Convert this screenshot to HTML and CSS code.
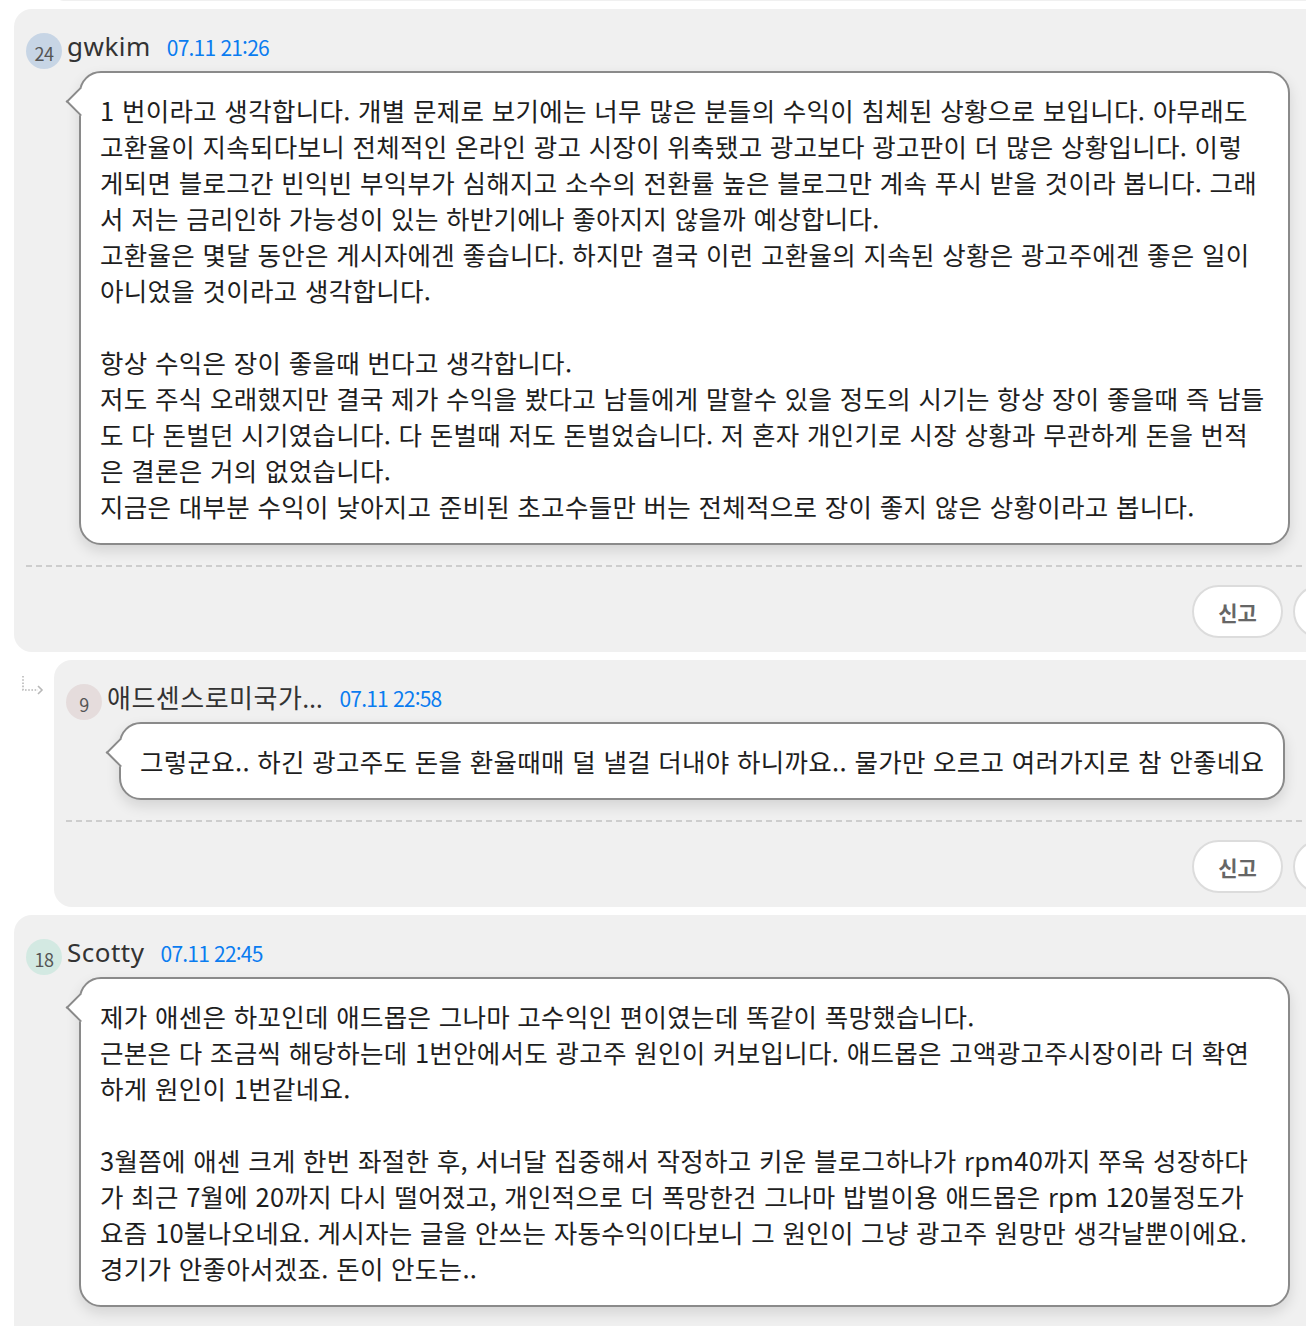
FILE: index.html
```html
<!DOCTYPE html>
<html lang="ko">

<head>
    <meta charset="utf-8">
    <title>댓글</title>
    <link rel="stylesheet" href="styles.css">
</head>

<body>
    <div class="thread">

        <!-- bottom of the previous reply, scrolled mostly out of view -->
        <div class="reply-row prev-stub">
            <div class="reply-icon"></div>
            <div class="card"></div>
        </div>

        <div class="card">
            <div class="comment-head">
                <span class="level level-blue">24</span>
                <span class="nick">gwkim</span>
                <span class="date">07.11 21:26</span>
            </div>
            <div class="bubble bubble-full">
                1 번이라고 생각합니다. 개별 문제로 보기에는 너무 많은 분들의 수익이 침체된 상황으로 보입니다. 아무래도<br>
                고환율이 지속되다보니 전체적인 온라인 광고 시장이 위축됐고 광고보다 광고판이 더 많은 상황입니다. 이렇<br>
                게되면 블로그간 빈익빈 부익부가 심해지고 소수의 전환률 높은 블로그만 계속 푸시 받을 것이라 봅니다. 그래<br>
                서 저는 금리인하 가능성이 있는 하반기에나 좋아지지 않을까 예상합니다.<br>
                고환율은 몇달 동안은 게시자에겐 좋습니다. 하지만 결국 이런 고환율의 지속된 상황은 광고주에겐 좋은 일이<br>
                아니었을 것이라고 생각합니다.<br>
                <br>
                항상 수익은 장이 좋을때 번다고 생각합니다.<br>
                저도 주식 오래했지만 결국 제가 수익을 봤다고 남들에게 말할수 있을 정도의 시기는 항상 장이 좋을때 즉 남들<br>
                도 다 돈벌던 시기였습니다. 다 돈벌때 저도 돈벌었습니다. 저 혼자 개인기로 시장 상황과 무관하게 돈을 번적<br>
                은 결론은 거의 없었습니다.<br>
                지금은 대부분 수익이 낮아지고 준비된 초고수들만 버는 전체적으로 장이 좋지 않은 상황이라고 봅니다.
            </div>
            <div class="divider"></div>
            <div class="actions">
                <button class="pill">신고</button>
                <button class="pill">답글</button>
            </div>
        </div>

        <div class="reply-row">
            <div class="reply-icon">
                <svg width="24" height="20" viewBox="0 0 24 20">
                    <path d="M2 1 V15 H17" fill="none" stroke="#b8b8b8" stroke-width="1.6" stroke-dasharray="1.6 1.6" />
                    <path d="M17 11 L21 15 L17 19" fill="none" stroke="#b8b8b8" stroke-width="1.6" />
                </svg>
            </div>
            <div class="card">
                <div class="comment-head">
                    <span class="level level-rose">9</span>
                    <span class="nick">애드센스로미국가…</span>
                    <span class="date">07.11 22:58</span>
                </div>
                <div class="bubble">
                    그렇군요.. 하긴 광고주도 돈을 환율때매 덜 낼걸 더내야 하니까요.. 물가만 오르고 여러가지로 참 안좋네요
                </div>
                <div class="divider"></div>
                <div class="actions">
                    <button class="pill">신고</button>
                    <button class="pill">답글</button>
                </div>
            </div>
        </div>

        <div class="card">
            <div class="comment-head">
                <span class="level level-mint">18</span>
                <span class="nick">Scotty</span>
                <span class="date">07.11 22:45</span>
            </div>
            <div class="bubble bubble-full">
                제가 애센은 하꼬인데 애드몹은 그나마 고수익인 편이였는데 똑같이 폭망했습니다.<br>
                근본은 다 조금씩 해당하는데 1번안에서도 광고주 원인이 커보입니다. 애드몹은 고액광고주시장이라 더 확연<br>
                하게 원인이 1번같네요.<br>
                <br>
                3월쯤에 애센 크게 한번 좌절한 후, 서너달 집중해서 작정하고 키운 블로그하나가 rpm40까지 쭈욱 성장하다<br>
                가 최근 7월에 20까지 다시 떨어졌고, 개인적으로 더 폭망한건 그나마 밥벌이용 애드몹은 rpm 120불정도가<br>
                요즘 10불나오네요. 게시자는 글을 안쓰는 자동수익이다보니 그 원인이 그냥 광고주 원망만 생각날뿐이에요.<br>
                경기가 안좋아서겠죠. 돈이 안도는..
            </div>
            <div class="divider"></div>
            <div class="actions">
                <button class="pill">신고</button>
                <button class="pill">답글</button>
            </div>
        </div>

    </div>
</body>

</html>
```

FILE: styles.css
```css
html,
body {
    margin: 0;
    background-color: white;
    overflow: hidden;
}

body {
    font-family: "Noto Sans CJK KR", sans-serif;
    color: #1e1e1e;
}

.thread {
    width: 1382px;
    padding-left: 14px;
    display: flex;
    flex-direction: column;
    gap: 8px;
}

.card {
    background-color: #f0f0f0;
    border-radius: 18px;
    padding: 22px 12px 14px 12px;
}

.reply-row {
    display: flex;
}

.reply-row .card {
    flex: 1;
}

.reply-icon {
    width: 40px;
    flex-shrink: 0;
    padding-top: 15px;
    padding-left: 7px;
    box-sizing: border-box;
}

.prev-stub {
    margin-top: -19px;
}

.prev-stub .card {
    height: 20px;
    padding: 0;
}

.comment-head {
    display: flex;
    align-items: center;
    height: 40px;
}

.level {
    width: 36px;
    height: 36px;
    border-radius: 50%;
    display: flex;
    align-items: center;
    justify-content: center;
    padding-top: 4px;
    box-sizing: border-box;
    font-size: 18px;
    letter-spacing: -0.5px;
    color: #555;
    margin-right: 5px;
}

.level-blue {
    background-color: #c7d5e5;
}

.level-rose {
    background-color: #e5dcdc;
}

.level-mint {
    background-color: #d3e9e2;
}

.nick {
    font-family: "Noto Sans", "Noto Sans CJK KR", sans-serif;
    font-size: 26px;
    letter-spacing: 0.5px;
    color: #333;
    margin-right: 16px;
    padding-bottom: 10px;
}

.date {
    font-size: 21px;
    letter-spacing: -0.8px;
    color: #0a7cf0;
    padding-bottom: 9px;
}

.bubble {
    position: relative;
    display: inline-block;
    max-width: 1211px;
    box-sizing: border-box;
    margin-left: 53px;
    padding: 19px 19px;
    background-color: white;
    border: 2px solid #8a8a8a;
    border-radius: 22px;
    box-shadow: 0 6px 14px rgba(0, 0, 0, 0.12);
    font-size: 25.5px;
    letter-spacing: 0.3px;
    line-height: 36px;
}

.bubble-full {
    display: block;
}

/* speech bubble tail */
.bubble::before {
    content: "";
    position: absolute;
    left: -11px;
    top: 18px;
    width: 19px;
    height: 19px;
    background-color: white;
    border-left: 2px solid #8a8a8a;
    border-bottom: 2px solid #8a8a8a;
    transform: rotate(45deg);
}

.divider {
    height: 2px;
    margin-top: 20px;
    background-image: linear-gradient(to right, #cdcdcd 6px, transparent 6px);
    background-size: 10px 2px;
}

.actions {
    display: flex;
    justify-content: flex-end;
    gap: 10px;
    margin-top: 18px;
}

.pill {
    width: 91px;
    height: 53px;
    border-radius: 27px;
    border: 2px solid #dcdcdc;
    background-color: white;
    font-family: "Noto Sans CJK KR", sans-serif;
    font-size: 21px;
    font-weight: bold;
    color: #666;
}
```
